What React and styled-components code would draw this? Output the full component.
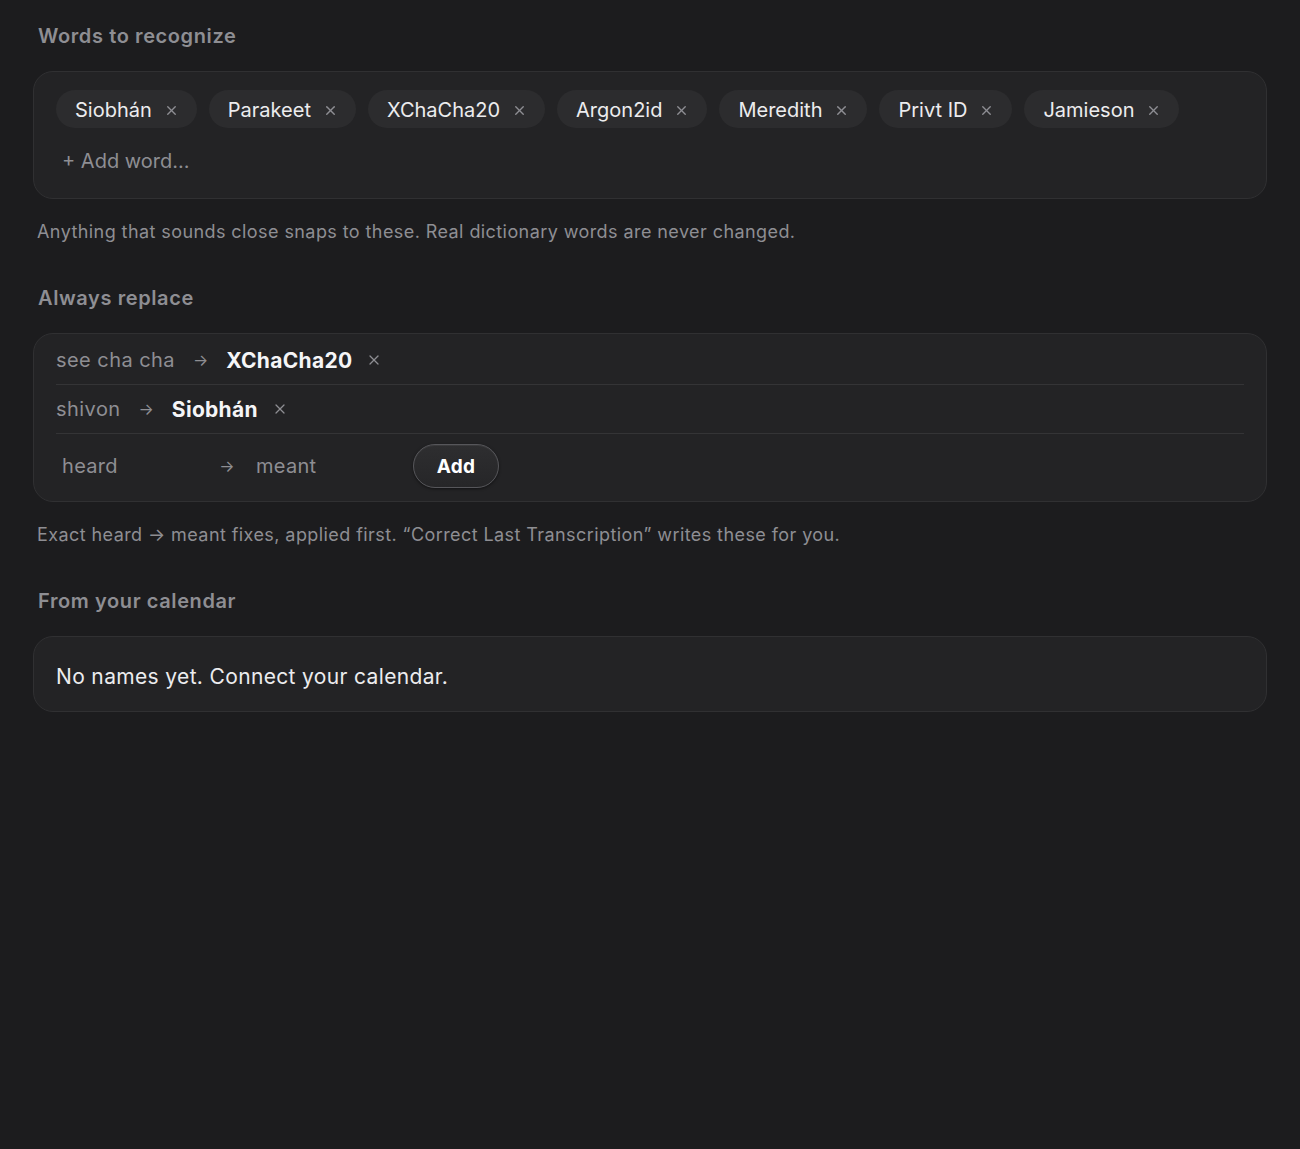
import React from 'react'
import styled, { createGlobalStyle } from 'styled-components'
import { X } from 'lucide-react'

const GlobalStyle = createGlobalStyle`
    html, body {
        margin: 0;
        padding: 0;
        background-color: #1c1c1e;
        font-family: Inter, 'Liberation Sans', sans-serif;
        -webkit-font-smoothing: antialiased;
    }
    #root {
        min-height: 100vh;
    }
`

const Page = styled.div`
    min-height: 100vh;
    box-sizing: border-box;
    padding: 24px 33px;
    display: flex;
    flex-direction: column;
`

const Section = styled.section`
    display: flex;
    flex-direction: column;
    margin-bottom: 43px;
`

const Heading = styled.h2`
    margin: 0 0 23px 5px;
    font-size: 20px;
    line-height: 24px;
    font-weight: 600;
    letter-spacing: 0.6px;
    color: #8e8e93;
`

const Card = styled.div`
    background-color: #232325;
    border: 1px solid #303032;
    border-radius: 20px;
    padding: ${(props) => props.pad || '0 22px'};
    box-sizing: border-box;
`

const Hint = styled.p`
    margin: 22px 0 0 4px;
    font-size: 18px;
    line-height: 22px;
    color: #8e8e93;
    letter-spacing: 0.42px;
`

const PillList = styled.div`
    display: flex;
    flex-wrap: wrap;
    gap: 12px;
`

const Pill = styled.span`
    display: inline-flex;
    align-items: center;
    height: 38px;
    padding: 2px 18px 0 19px;
    box-sizing: border-box;
    gap: 12px;
    border-radius: 19px;
    background-color: #2c2c2e;
    color: #ececee;
    font-size: 20px;

    svg {
        color: #8e8e93;
    }
`

const AddWord = styled.input`
    display: block;
    margin-top: 18px;
    height: 30px;
    width: 300px;
    padding: 0 6px;
    background: transparent;
    border: none;
    outline: none;
    font-family: inherit;
    font-size: 20px;
    color: #ececee;

    &::placeholder {
        color: #8e8e93;
    }
`

const Row = styled.div`
    display: flex;
    align-items: center;
    gap: 18px;
    height: 48px;
    border-bottom: 1px solid #343436;
    margin-top: ${(props) => (props.first ? '2px' : '0')};
`

const Heard = styled.span`
    font-size: 20px;
    letter-spacing: 0.45px;
    color: #8e8e93;
`

const Arrow = styled.span`
    font-size: 16px;
    color: #8e8e93;
    width: ${(props) => props.w || 'auto'};
    text-align: center;
`

const Meant = styled.span`
    font-size: 21px;
    font-weight: 700;
    letter-spacing: 0.3px;
    color: #f5f5f7;
`

const RemoveButton = styled.button`
    margin-left: -4px;
    background: none;
    border: none;
    padding: 0;
    display: grid;
    place-content: center;
    color: #8e8e93;
    cursor: pointer;
`

const NewRow = styled.div`
    display: flex;
    align-items: center;
    padding: 10px 0 13px;
`

const Field = styled.input`
    width: ${(props) => props.w};
    margin-left: ${(props) => props.ml || '0'};
    box-sizing: border-box;
    padding: 0 6px;
    height: 32px;
    background: transparent;
    border: none;
    outline: none;
    font-family: inherit;
    font-size: 20px;
    letter-spacing: 0.3px;
    color: #ececee;

    &::placeholder {
        color: #8e8e93;
    }
`

const AddButton = styled.button`
    margin-left: 13px;
    width: 86px;
    height: 44px;
    border-radius: 22px;
    border: 1.5px solid #56565a;
    background: linear-gradient(#2e2e30, #262628);
    box-shadow: 0 1px 3px rgba(0, 0, 0, 0.5), inset 0 1px 0 rgba(255, 255, 255, 0.06);
    color: #ffffff;
    font-family: inherit;
    font-size: 19px;
    font-weight: 700;
    letter-spacing: 0.3px;
    cursor: pointer;
`

const Empty = styled.div`
    font-size: 21px;
    line-height: 26px;
    letter-spacing: 0.35px;
    color: #ececee;
`

const words = ['Siobhán', 'Parakeet', 'XChaCha20', 'Argon2id', 'Meredith', 'Privt ID', 'Jamieson']

const replacements = [
    { heard: 'see cha cha', meant: 'XChaCha20' },
    { heard: 'shivon', meant: 'Siobhán' },
]

const App = () => {
    return (
        <>
            <GlobalStyle />
            <Page>
                <Section>
                    <Heading>Words to recognize</Heading>
                    <Card pad="18px 22px 22px">
                        <PillList>
                            {words.map((w) => (
                                <Pill key={w}>
                                    {w}
                                    <X size={15} strokeWidth={2.2} />
                                </Pill>
                            ))}
                        </PillList>
                        <AddWord placeholder="+ Add word..." />
                    </Card>
                    <Hint>Anything that sounds close snaps to these. Real dictionary words are never changed.</Hint>
                </Section>

                <Section>
                    <Heading>Always replace</Heading>
                    <Card>
                        {replacements.map(({ heard, meant }, i) => (
                            <Row key={heard} first={i === 0}>
                                <Heard>{heard}</Heard>
                                <Arrow>→</Arrow>
                                <Meant>{meant}</Meant>
                                <RemoveButton><X size={16} strokeWidth={1.9} /></RemoveButton>
                            </Row>
                        ))}
                        <NewRow>
                            <Field w="156px" placeholder="heard" />
                            <Arrow w="30px">→</Arrow>
                            <Field w="150px" ml="8px" placeholder="meant" />
                            <AddButton>Add</AddButton>
                        </NewRow>
                    </Card>
                    <Hint>Exact heard → meant fixes, applied first. “Correct Last Transcription” writes these for you.</Hint>
                </Section>

                <Section>
                    <Heading>From your calendar</Heading>
                    <Card pad="27px 22px 21px">
                        <Empty>No names yet. Connect your calendar.</Empty>
                    </Card>
                </Section>
            </Page>
        </>
    )
}

export default App
